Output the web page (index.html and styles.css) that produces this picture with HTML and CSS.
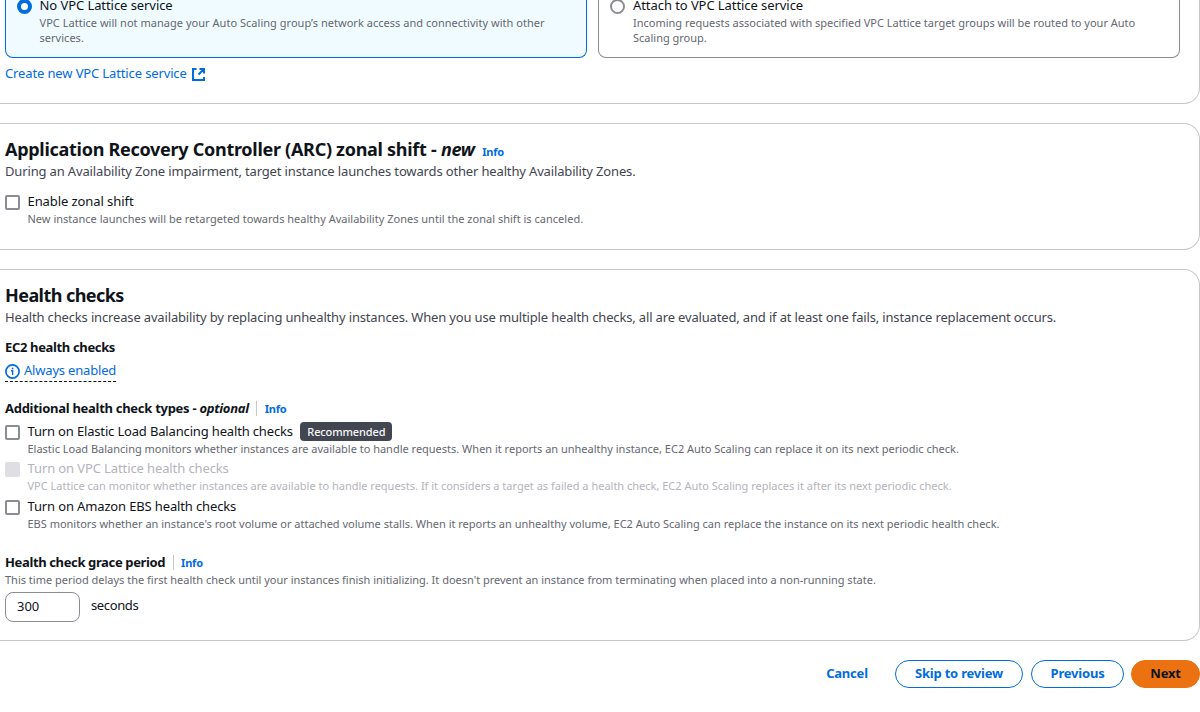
FILE: index.html
```html
<!DOCTYPE html>
<html lang="en">
<head>
<meta charset="utf-8">
<title>Create Auto Scaling group</title>
<link rel="stylesheet" href="styles.css">
</head>
<body>
<main class="page">
  <section class="panel panel-lattice">
    <div class="tiles">
      <label class="tile tile-selected">
        <span class="radio radio-on"></span>
        <span class="option-text">
          <span class="label">No VPC Lattice service</span>
          <span class="hint">VPC Lattice will not manage your Auto Scaling group’s network access and connectivity with other<br>services.</span>
        </span>
      </label>
      <label class="tile">
        <span class="radio"></span>
        <span class="option-text">
          <span class="label">Attach to VPC Lattice service</span>
          <span class="hint">Incoming requests associated with specified VPC Lattice target groups will be routed to your Auto<br>Scaling group.</span>
        </span>
      </label>
    </div>
    <a class="external">Create new VPC Lattice service
      <svg class="external-icon" viewBox="0 0 13 13" width="13" height="13"><path d="M4.5 1H1v11h11V9M7.5 1H12v4.5M11.5 1.5 6.5 6.5" fill="none" stroke="currentColor" stroke-width="2"/></svg>
    </a>
  </section>

  <section class="panel panel-arc">
    <h2 class="heading"><span>Application Recovery Controller (ARC) zonal shift - <em>new</em></span><a class="info">Info</a></h2>
    <p class="description arc-description">During an Availability Zone impairment, target instance launches towards other healthy Availability Zones.</p>
    <label class="option">
      <span class="checkbox"></span>
      <span class="option-text">
        <span class="label arc-label">Enable zonal shift</span>
        <span class="hint arc-hint">New instance launches will be retargeted towards healthy Availability Zones until the zonal shift is canceled.</span>
      </span>
    </label>
  </section>

  <section class="panel panel-health">
    <h2 class="heading health-heading">Health checks</h2>
    <p class="description">Health checks increase availability by replacing unhealthy instances. When you use multiple health checks, all are evaluated, and if at least one fails, instance replacement occurs.</p>
    <h3 class="field-title ec2-title">EC2 health checks</h3>
    <a class="status">
      <svg viewBox="0 0 15 15" width="15" height="15"><circle cx="7.5" cy="7.5" r="6.6" fill="none" stroke="currentColor" stroke-width="1.7"/><path d="M6 6.7h1.6V11" fill="none" stroke="currentColor" stroke-width="1.4"/><path d="M6.7 3.7h1.7v1.6H6.7z" fill="currentColor"/></svg>
      <span>Always enabled</span>
    </a>
    <h3 class="field-title types-title"><span>Additional health check types - <em>optional</em></span><a class="info divided">Info</a></h3>
    <div class="options">
      <label class="option">
        <span class="checkbox"></span>
        <span class="option-text">
          <span class="label label-row">Turn on Elastic Load Balancing health checks <b class="badge">Recommended</b></span>
          <span class="hint">Elastic Load Balancing monitors whether instances are available to handle requests. When it reports an unhealthy instance, EC2 Auto Scaling can replace it on its next periodic check.</span>
        </span>
      </label>
      <label class="option option-disabled">
        <span class="checkbox"></span>
        <span class="option-text">
          <span class="label">Turn on VPC Lattice health checks</span>
          <span class="hint">VPC Lattice can monitor whether instances are available to handle requests. If it considers a target as failed a health check, EC2 Auto Scaling replaces it after its next periodic check.</span>
        </span>
      </label>
      <label class="option option-last">
        <span class="checkbox"></span>
        <span class="option-text">
          <span class="label">Turn on Amazon EBS health checks</span>
          <span class="hint">EBS monitors whether an instance's root volume or attached volume stalls. When it reports an unhealthy volume, EC2 Auto Scaling can replace the instance on its next periodic health check.</span>
        </span>
      </label>
    </div>
    <h3 class="field-title grace-title"><span>Health check grace period</span><a class="info divided">Info</a></h3>
    <p class="hint">This time period delays the first health check until your instances finish initializing. It doesn't prevent an instance from terminating when placed into a non-running state.</p>
    <div class="duration">
      <input class="duration-input" type="text" value="300">
      <span class="label">seconds</span>
    </div>
  </section>

  <footer class="actions">
    <button class="button button-link">Cancel</button>
    <button class="button button-skip">Skip to review</button>
    <button class="button button-previous">Previous</button>
    <button class="button button-primary">Next</button>
  </footer>
</main>
</body>
</html>
```
FILE: styles.css
```css
* { box-sizing: border-box; }
body {
  margin: 0;
  background: #fff;
  color: #0f141a;
  font-family: "Noto Sans", "Open Sans", sans-serif;
  font-size: 13px;
  line-height: 18px;
}
h2, h3, p { margin: 0; }
a { color: #006ce0; }
.page { height: 712px; overflow: hidden; display: flex; flex-direction: column; }
.panel {
  flex: none;
  border: 1px solid #c6c6cd;
  border-left: 0;
  border-radius: 0 16px 16px 0;
  padding: 14px 19px 0 5px;
  margin-bottom: 19px;
}
.panel-lattice { height: 124px; margin-top: -20px; padding-top: 0; }
.panel-arc { height: 127px; }
.panel-health { height: 372px; }
.tiles { display: grid; grid-template-columns: 582px 582px; gap: 11px; height: 77px; }
.tile {
  display: flex;
  gap: 8px;
  border: 1px solid #8c8c94;
  border-top: 0;
  border-radius: 0 0 8px 8px;
  padding: 15px 11px 0;
}
.tile-selected { gap: 7.5px; border-color: #006ce0; background: #f0fbff; }
.tile-selected .hint { letter-spacing: 0.027px; }
.radio { flex: none; width: 15px; height: 15px; margin-top: 3px; border: 2px solid #8c8c94; border-radius: 50%; background: #fff; }
.radio-on { border: 4px solid #006ce0; }
.option-text { display: flex; flex-direction: column; gap: 1px; }
.label { white-space: nowrap; letter-spacing: -0.14px; }
.tile .label { letter-spacing: -0.07px; }
.hint { font-size: 11px; line-height: 15px; color: #656871; white-space: nowrap; letter-spacing: -0.006px; }
.arc-hint { letter-spacing: 0.012px; }
.arc-label { letter-spacing: -0.08px; }
.external { display: flex; align-items: center; gap: 5px; margin-top: 6px; letter-spacing: -0.13px; }
.external-icon { flex: none; margin-top: 2px; }
.heading { display: flex; align-items: baseline; gap: 7.5px; font-size: 18px; line-height: 22px; font-weight: 700; letter-spacing: -0.28px; white-space: nowrap; }
.health-heading { letter-spacing: -0.56px; }
.info { font-size: 11px; line-height: 15px; font-weight: 700; letter-spacing: -0.2px; }
.description { margin-top: 2px; color: #424650; white-space: nowrap; letter-spacing: -0.158px; }
.option { display: flex; gap: 7.5px; }
.arc-description { margin-bottom: 12px; letter-spacing: -0.15px; }
.checkbox { flex: none; width: 15px; height: 15px; margin-top: 3px; border: 2px solid #8c8c94; border-radius: 2px; background: #fff; }
.field-title { display: flex; align-items: center; font-size: 13px; line-height: 18px; font-weight: 700; white-space: nowrap; }
.ec2-title { margin-top: 12px; letter-spacing: -0.35px; }
.status { display: flex; gap: 4px; align-items: center; width: 111px; height: 21px; margin-top: 5px; padding-bottom: 2px; border-bottom: 1px dashed #0f141a; white-space: nowrap; letter-spacing: -0.19px; }
.status svg { flex: none; margin-top: 2px; }
.types-title { margin-top: 17px; letter-spacing: -0.28px; }
.divided { border-left: 1px solid #c6c6cd; margin-left: 7px; padding-left: 8px; }
.options { display: flex; flex-direction: column; gap: 3px; margin-top: 5px; }
.option-last { margin-top: 1px; }
.label-row { display: flex; align-items: center; gap: 7px; height: 18px; letter-spacing: -0.16px; }
.badge { background: #424650; color: #f6f6f9; border-radius: 4px; font-size: 11px; line-height: 19px; padding: 0 8px 0 7.5px; font-weight: 500; margin-top: 1px; width: 92px; letter-spacing: -0.12px; }
.option-disabled .checkbox { background: #dedee3; border-color: #dedee3; }
.option-disabled .label, .option-disabled .hint { color: #b4b4bb; }
.option-disabled .label { letter-spacing: -0.11px; }
.grace-title { margin-top: 22px; letter-spacing: -0.37px; }
.grace-title .divided { margin-left: 7.5px; padding-left: 7.5px; }
.grace-title + .hint { margin-top: 1px; }
.duration { display: flex; gap: 11px; margin-top: 5px; }
.duration .label { margin-top: 4px; letter-spacing: -0.38px; }
.duration-input { width: 75px; height: 30px; border: 1px solid #8c8c94; border-radius: 8px; padding: 0 11px 2px; font: inherit; color: inherit; }
.actions { display: flex; justify-content: flex-end; gap: 8px; height: 28px; }
.button { height: 28px; padding: 0 0 2px; border: 1px solid #006ce0; border-radius: 14px; background: #fff; color: #006ce0; font: 700 13px/18px "Noto Sans", sans-serif; letter-spacing: -0.2px; white-space: nowrap; }
.button-link { width: 80px; border-color: transparent; }
.button-skip { width: 128px; }
.button-previous { width: 93px; }
.button-primary { width: 69px; margin-left: -1px; border-color: #ec7211; background: #ec7211; color: #0f141a; }
```
